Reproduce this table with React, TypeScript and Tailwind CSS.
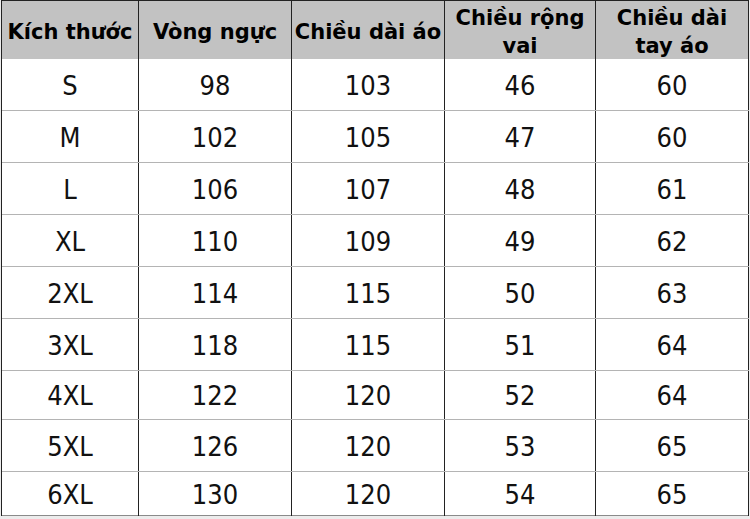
const headers: string[][] = [
  ["Kích thước"],
  ["Vòng ngực"],
  ["Chiều dài áo"],
  ["Chiều rộng", "vai"],
  ["Chiều dài", "tay áo"],
];

const rows: string[][] = [
  ["S", "98", "103", "46", "60"],
  ["M", "102", "105", "47", "60"],
  ["L", "106", "107", "48", "61"],
  ["XL", "110", "109", "49", "62"],
  ["2XL", "114", "115", "50", "63"],
  ["3XL", "118", "115", "51", "64"],
  ["4XL", "122", "120", "52", "64"],
  ["5XL", "126", "120", "53", "65"],
  ["6XL", "130", "120", "54", "65"],
];

const rowHeights = ["h-[52px]", "h-[52px]", "h-[52px]", "h-[52px]", "h-[52px]", "h-[52px]", "h-[49px]", "h-[52px]", "h-[44px]"];

export default function App() {
  return (
    <div className="w-[750px] h-[519px] bg-[#ececec] pl-[1px]">
      <div className="w-[748px] border-l border-t border-[#222] bg-white">
        {/* header */}
        <div className="grid grid-cols-[137px_153px_153px_151px_153px] h-[58px] bg-[#c2c2c2] font-['DejaVu_Sans',Verdana,sans-serif] font-bold text-[21px] leading-[28px] text-black">
          {headers.map((h, i) => (
            <div key={i} className="flex flex-col items-center justify-center pt-[3px] border-r border-[#222] text-center whitespace-nowrap">
              {h.map((line, j) => (
                <span key={j}>{line}</span>
              ))}
            </div>
          ))}
        </div>

        {/* body */}
        {rows.map((r, i) => (
          <div
            key={i}
            className={`grid grid-cols-[137px_153px_153px_151px_153px] ${rowHeights[i]} border-b ${i === rows.length - 1 ? "border-[#8a8a8a]" : "border-[#b4b4b4]"} font-['DejaVu_Sans_Condensed','Liberation_Sans',sans-serif] text-[27px] text-[#111]`}
          >
            {r.map((c, j) => (
              <div key={j} className="flex items-center justify-center pt-[3px] border-r border-[#222]">
                {c}
              </div>
            ))}
          </div>
        ))}
      </div>
    </div>
  );
}
